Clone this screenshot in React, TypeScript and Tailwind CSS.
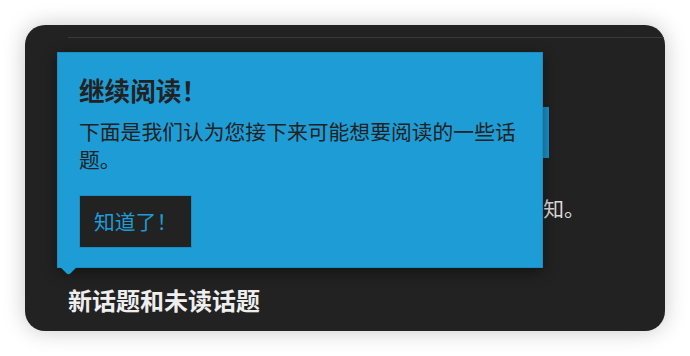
const FONT = "font-['Noto_Sans_CJK_SC','Noto_Sans',sans-serif]";

function OnboardingTip(): JSX.Element {
   return (
      <div className="absolute left-[32px] top-[27px] w-[486px] h-[216px] bg-[#1e9cd6] border border-[#1b8dc1] shadow-[0_4px_14px_rgba(0,0,0,0.45)] px-[21px] pt-[21px] text-[#222222]">
         <h2 className="text-[25.6px] leading-[32px] font-bold">继续阅读！</h2>
         <p className="mt-[11px] text-[20.8px] leading-[28px]">
            下面是我们认为您接下来可能想要阅读的一些话题。
         </p>
         <button className="mt-[22px] bg-[#222222] border border-[#1b8dc1] px-[14px] py-[11px] text-[20.8px] leading-[29px] text-[#1e9cd6]">
            知道了！
         </button>
         {/* Pointer */}
         <div className="absolute left-[5px] bottom-[-6px] w-[11px] h-[11px] bg-[#1e9cd6] rotate-45 rounded-br-[3px]" />
      </div>
   );
}

export default function App(): JSX.Element {
   return (
      <div className={`min-h-[356px] bg-white p-[25px] ${FONT}`}>
         <div className="relative w-[640px] h-[306px] rounded-[20px] bg-[#222222] overflow-hidden shadow-[0_0_22px_rgba(0,0,0,0.22)] pl-[43px]">
            <div className="mt-[12px] h-px bg-[#393939]" />
            <div className="mt-[69px] w-[481px] h-[51px] bg-[#1d93ca]" />
            <p className="mt-[35px] -ml-[3px] text-[20.8px] leading-[30px] text-[#dddddd] whitespace-nowrap">
               当有人回复您或者提及您时，您会在这里收到相关通知。
            </p>
            <h3 className="mt-[62px] text-[24px] leading-[30px] font-bold text-[#eeeeee]">新话题和未读话题</h3>
            <OnboardingTip />
         </div>
      </div>
   );
}
